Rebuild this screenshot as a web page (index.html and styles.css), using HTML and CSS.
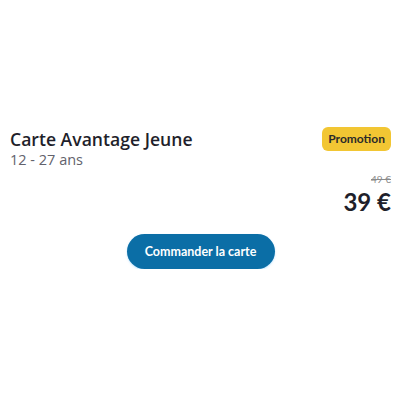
FILE: index.html
```html
<!DOCTYPE html>
<html lang="fr">
<head>
<meta charset="utf-8">
<title>Carte Avantage Jeune</title>
<link rel="stylesheet" href="styles.css">
</head>
<body>
<section class="offer">
  <div class="offer-head">
    <div class="offer-info">
      <h2 class="offer-title">Carte Avantage Jeune</h2>
      <p class="offer-age">12 - 27 ans</p>
    </div>
    <div class="offer-pricing">
      <span class="badge">Promotion</span>
      <span class="price-old">49 €</span>
      <span class="price">39 €</span>
    </div>
  </div>
  <div class="offer-action">
    <button class="btn-order" type="button">Commander la carte</button>
  </div>
</section>
</body>
</html>
```

FILE: styles.css
```css
html, body {
  margin: 0;
  background: #ffffff;
}

.offer {
  padding: 127px 9px 0 10px;
  font-family: "Open Sans", "Noto Sans", sans-serif;
  color: #1f1f2b;
}

.offer-head {
  display: flex;
  justify-content: space-between;
  align-items: flex-start;
}

.offer-title {
  margin: 0;
  font-size: 17.6px;
  font-weight: 600;
  line-height: 24px;
}

.offer-age {
  margin: 0;
  font-size: 14.5px;
  line-height: 18px;
  color: #62626c;
}

.offer-pricing {
  display: flex;
  flex-direction: column;
  align-items: flex-end;
}

.badge {
  background: #f2c633;
  border-radius: 6px;
  padding: 4px 6px;
  font-family: Lato, sans-serif;
  font-weight: 700;
  font-size: 12px;
  line-height: 16px;
  color: #2a2a2a;
}

.price-old {
  margin-top: 22px;
  font-family: Lato, sans-serif;
  font-size: 10px;
  line-height: 12px;
  color: #8a8a8a;
  text-decoration: line-through;
}

.price {
  margin-top: 4px;
  font-family: Lato, sans-serif;
  font-weight: 700;
  font-size: 24px;
  line-height: 26px;
  color: #1f1f2b;
}

.offer-action {
  display: flex;
  justify-content: center;
  margin-top: 19px;
}

.btn-order {
  width: 148px;
  height: 35px;
  border: 0;
  border-radius: 18px;
  background: #0b6ea6;
  color: #ffffff;
  font-family: Lato, sans-serif;
  font-weight: 700;
  font-size: 12.5px;
  box-shadow: 0 1px 2px rgba(120, 200, 255, 0.5);
}
```
